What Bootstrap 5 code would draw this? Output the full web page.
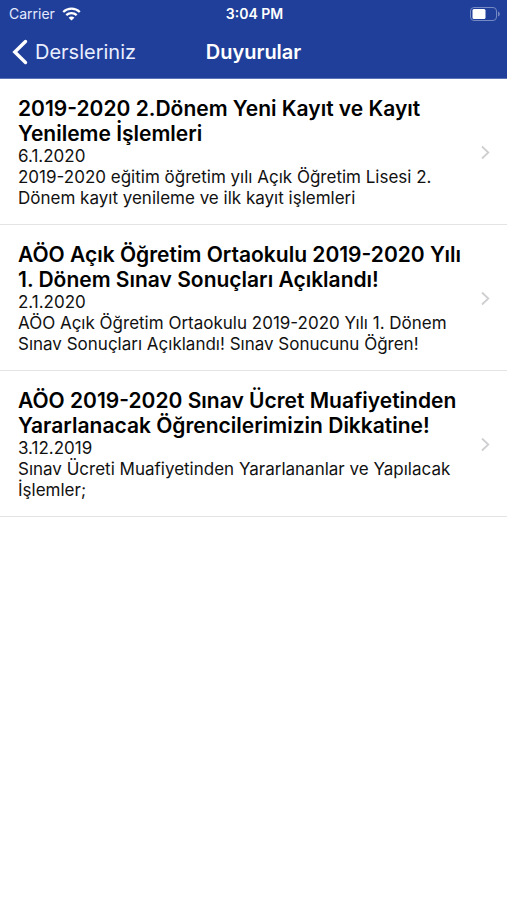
<!DOCTYPE html>
<html lang="tr">
<head>
<meta charset="utf-8">
<meta name="viewport" content="width=device-width, initial-scale=1">
<title>Duyurular</title>
<link rel="stylesheet" href="https://cdn.jsdelivr.net/npm/bootstrap@5.3.0/dist/css/bootstrap.min.css">
<style>
body { font-family: Inter, sans-serif; color: #000; background: #fff; }
.app-header { background: #203f9a; color: #fff; border-bottom: 1px solid #5c74b6; }
.status-bar { height: 27px; font-size: 14px; line-height: 20px; padding: 0 7px 0 9px; }
.title-bar { height: 51px; font-size: 20px; line-height: 24px; padding: 0 12px 2px; }
.title-bar h1 { font-size: 20px; line-height: 24px; font-weight: 600; }
.back-link { color: #e9eeff; gap: 7px; }
.signal { gap: 7px; color: #e4eaff; }
.notice { padding: 17px 16px 15px 18px; border-bottom: 1px solid #e4e4e6; color: #000; }
.notice:hover { color: #000; }
.notice h2 { font-size: 21px; line-height: 25px; font-weight: 600; }
.notice p { font-size: 17px; line-height: 21px; color: #111; }
.notice-text { max-width: 450px; }
</style>
<script src="https://cdn.jsdelivr.net/npm/bootstrap@5.3.0/dist/js/bootstrap.bundle.min.js"></script>
</head>
<body>
<header class="app-header">
  <div class="status-bar row g-0 align-items-center">
    <div class="col d-flex align-items-center signal"><span>Carrier</span>
      <svg width="19" height="14" viewBox="0 0 19 14" fill="none" stroke="#fff" stroke-width="2.3" aria-hidden="true"><path d="M1.2 5C5.9.6 13.1.6 17.8 5M4.3 8.2c2.9-2.7 7.5-2.7 10.4 0"/><path d="M9.5 13.6 6.6 10.7c1.6-1.5 4.2-1.5 5.8 0z" fill="#fff" stroke="none"/></svg>
    </div>
    <div class="col-auto fw-semibold">3:04 PM</div>
    <div class="col d-flex justify-content-end">
      <svg width="30" height="14" viewBox="0 0 30 14" aria-hidden="true"><rect x=".5" y=".5" width="26" height="13" rx="3.5" fill="none" stroke="#7589c2"/><rect x="2.5" y="2" width="13" height="10" rx="1.5" fill="#fff"/><path d="M28 4.5c2.4 1 2.4 4 0 5z" fill="#7589c2"/></svg>
    </div>
  </div>
  <nav class="title-bar row g-0 align-items-center">
    <div class="col d-flex"><a href="#" class="back-link d-inline-flex align-items-center text-decoration-none">
      <svg width="16" height="26" viewBox="0 0 16 26" fill="none" stroke="#fff" stroke-width="3.4" stroke-linecap="round" aria-hidden="true"><path d="M13.5 2.5 2.8 13l10.7 10.5"/></svg>Dersleriniz</a></div>
    <h1 class="col-auto m-0">Duyurular</h1>
    <div class="col"></div>
  </nav>
</header>
<main>
  <a href="#" class="notice d-flex align-items-center justify-content-between text-decoration-none">
    <div class="notice-text"><h2 class="m-0">2019-2020 2.Dönem Yeni Kayıt ve Kayıt Yenileme İşlemleri</h2><p class="m-0">6.1.2020</p><p class="m-0">2019-2020 eğitim öğretim yılı Açık Öğretim Lisesi 2. Dönem kayıt yenileme ve ilk kayıt işlemleri</p></div>
    <svg class="flex-shrink-0" width="11" height="16" viewBox="0 0 11 16" fill="none" stroke="#cfcfd2" stroke-width="1.8" aria-hidden="true"><path d="m2 1.5 6.3 6L2 13.5"/></svg>
  </a>
  <a href="#" class="notice d-flex align-items-center justify-content-between text-decoration-none">
    <div class="notice-text"><h2 class="m-0">AÖO Açık Öğretim Ortaokulu 2019-2020 Yılı 1. Dönem Sınav Sonuçları Açıklandı!</h2><p class="m-0">2.1.2020</p><p class="m-0">AÖO Açık Öğretim Ortaokulu 2019-2020 Yılı 1. Dönem Sınav Sonuçları Açıklandı! Sınav Sonucunu Öğren!</p></div>
    <svg class="flex-shrink-0" width="11" height="16" viewBox="0 0 11 16" fill="none" stroke="#cfcfd2" stroke-width="1.8" aria-hidden="true"><path d="m2 1.5 6.3 6L2 13.5"/></svg>
  </a>
  <a href="#" class="notice d-flex align-items-center justify-content-between text-decoration-none">
    <div class="notice-text"><h2 class="m-0">AÖO 2019-2020 Sınav Ücret Muafiyetinden Yararlanacak Öğrencilerimizin Dikkatine!</h2><p class="m-0">3.12.2019</p><p class="m-0">Sınav Ücreti Muafiyetinden Yararlananlar ve Yapılacak İşlemler;</p></div>
    <svg class="flex-shrink-0" width="11" height="16" viewBox="0 0 11 16" fill="none" stroke="#cfcfd2" stroke-width="1.8" aria-hidden="true"><path d="m2 1.5 6.3 6L2 13.5"/></svg>
  </a>
</main>
</body>
</html>
